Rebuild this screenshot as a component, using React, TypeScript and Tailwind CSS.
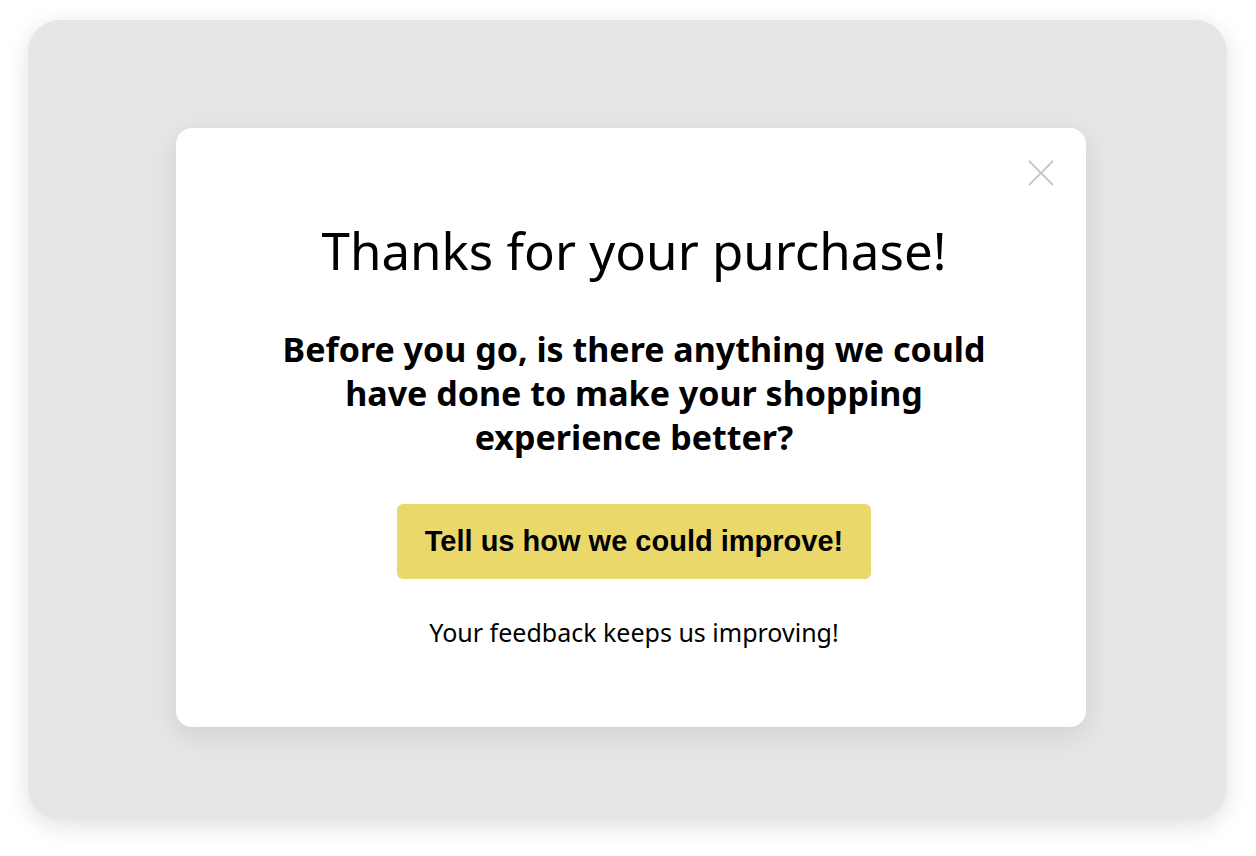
import React from "react";

export default function App() {
  return (
    <div className="w-[1256px] h-[856px] bg-white pt-[20px] pl-[28px] overflow-hidden" style={{ fontFamily: '"Noto Sans", sans-serif' }}>
      <div className="w-[1199px] h-[800px] rounded-[32px] bg-[#e6e6e6] shadow-[0_6px_24px_rgba(0,0,0,0.12)] pt-[108px] pl-[148px]">
        <div className="relative w-[910px] h-[599px] rounded-[16px] bg-white shadow-[0_8px_28px_rgba(0,0,0,0.10)] flex flex-col items-center pt-[92px] pl-[6px]">
          <button className="absolute top-[32px] right-[32px] w-[26px] h-[26px] flex items-center justify-center" aria-label="Close">
            <svg width="28" height="28" viewBox="0 0 28 28" fill="none">
              <path d="M1 1L27 27M27 1L1 27" stroke="#c4c4c4" strokeWidth="2" />
            </svg>
          </button>
          <h1 className="text-[51px] leading-[60px] font-normal text-black">Thanks for your purchase!</h1>
          <p className="mt-[47px] w-[720px] text-center text-[34px] leading-[44px] font-bold text-black">
            Before you go, is there anything we could have done to make your shopping experience better?
          </p>
          <button
            className="mt-[45px] w-[474px] h-[75px] rounded-[6px] bg-[#ebd86b] text-[29px] font-bold text-black"
            style={{ fontFamily: '"Liberation Sans", Arial, sans-serif' }}
          >
            Tell us how we could improve!
          </button>
          <p className="mt-[37px] text-[25px] leading-[32px] text-black">Your feedback keeps us improving!</p>
        </div>
      </div>
    </div>
  );
}
